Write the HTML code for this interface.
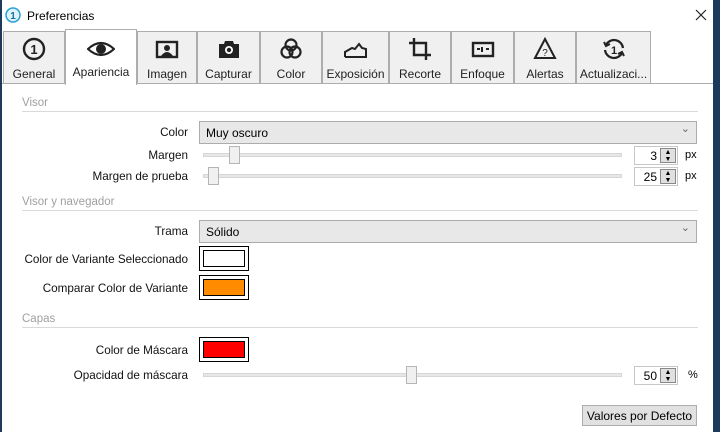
<!DOCTYPE html>
<html><head><meta charset="utf-8"><style>
*{margin:0;padding:0;box-sizing:border-box}
body{width:720px;height:432px;background:#1d3a5c;position:relative;overflow:hidden;font-family:"Liberation Sans",sans-serif;font-size:12px;color:#000}
.win{position:absolute;left:0;top:0;width:713px;height:432px;background:#fff}
.a{position:absolute}
.tab{position:absolute;top:31px;height:53px;background:#f0f0f0;border:1px solid #adadad;border-bottom:none;text-align:center}
.tab .l{position:absolute;bottom:3px;left:0;right:0;font-size:12px;color:#222}
.tab svg{position:absolute;left:50%;top:5px;margin-left:-12px}
.sel{background:#fff;top:29px;height:56px;z-index:2}
.sec{position:absolute;left:22px;width:676px;border-bottom:1px solid #d9d9d9;color:#a0a0a0;font-size:11.5px;height:15px}
.lbl{position:absolute;right:525px;text-align:right;font-size:11.7px;color:#111;white-space:nowrap}
.combo{position:absolute;left:199px;width:498px;height:23px;background:#e8e8e8;border:1px solid #acacac;padding:4px 6px;font-size:12px}
.combo:after{content:"⌄";position:absolute;right:6px;top:0;color:#666;font-size:11px}
.track{position:absolute;left:203px;width:419px;height:4px;background:#e7e7e7;border:1px solid #d6d6d6}
.thumb{position:absolute;width:11px;height:18px;background:#f0f0f0;border:1px solid #b5b5b5}
.num{position:absolute;left:634px;width:44px;height:19px;border:1px solid #c8c8c8;text-align:right;padding:2px 20px 0 0;font-size:12px}
.spin{position:absolute;right:1px;top:1px;width:16px;height:15px;background:#e0e0e0;border:1px solid #888;font-size:7px;line-height:7px;text-align:center}
.sw{position:absolute;left:199px;width:50px;height:25px;border:1px solid #000;padding:3px}
.sw div{width:100%;height:100%;border:1px solid #000}
</style></head><body>
<div class="win">
<div class="a" style="left:0;top:0;width:2px;height:432px;background:#1d3a5c"></div>
<svg class="a" style="left:5px;top:7px" width="16" height="16"><circle cx="8" cy="8" r="7" fill="#dff3fb" stroke="#29a0d8" stroke-width="1.5"/><text x="8" y="12" font-size="10" font-weight="bold" text-anchor="middle" fill="#1a6fa0" font-family="Liberation Sans">1</text></svg>
<div class="a" style="left:27px;top:9px;font-size:12px">Preferencias</div>
<svg class="a" style="left:695px;top:9px" width="12" height="12"><path d="M1 1L11 11M11 1L1 11" stroke="#222" stroke-width="1.2"/></svg>

<div class="tab" style="left:3px;width:62px"><svg width="24" height="24"><circle cx="12" cy="12" r="10" fill="none" stroke="#222" stroke-width="2.4"/><text x="12" y="17" font-size="13" font-weight="bold" text-anchor="middle" fill="#222" font-family="Liberation Sans">1</text></svg><div class="l">General</div></div>
<div class="tab sel" style="left:65px;width:72px"><svg width="28" height="24" style="top:7px;margin-left:-14px"><path d="M1 12 Q14 0 27 12 Q14 24 1 12Z" fill="none" stroke="#222" stroke-width="2.2"/><circle cx="14" cy="12" r="5" fill="#222"/></svg><div class="l" style="bottom:6px">Apariencia</div></div>
<div class="tab" style="left:137px;width:60px"><svg width="24" height="24"><rect x="2" y="5" width="20" height="15" fill="none" stroke="#222" stroke-width="2.4"/><circle cx="12" cy="11" r="3" fill="#222"/><path d="M6 19 Q12 11 18 19Z" fill="#222"/></svg><div class="l">Imagen</div></div>
<div class="tab" style="left:197px;width:63px"><svg width="24" height="24"><path d="M8 4h8l1 3h5v14H2V7h5z" fill="#222"/><circle cx="12" cy="13" r="4" fill="#fff"/><circle cx="12" cy="13" r="2.2" fill="#222"/></svg><div class="l">Capturar</div></div>
<div class="tab" style="left:260px;width:62px"><svg width="24" height="24"><g fill="none" stroke="#222" stroke-width="2.2"><circle cx="12" cy="8" r="5.5"/><circle cx="8" cy="15" r="5.5"/><circle cx="16" cy="15" r="5.5"/></g></svg><div class="l">Color</div></div>
<div class="tab" style="left:322px;width:67px"><svg width="24" height="24"><path d="M1 20V15l7-4 3 1 4-5 3 4 4 1v8" fill="none" stroke="#222" stroke-width="2"/><path d="M1 20h22" stroke="#222" stroke-width="2"/></svg><div class="l">Exposición</div></div>
<div class="tab" style="left:389px;width:62px"><svg width="24" height="24"><path d="M6 1v17h17M1 6h17v17" fill="none" stroke="#222" stroke-width="2.4"/></svg><div class="l">Recorte</div></div>
<div class="tab" style="left:451px;width:63px"><svg width="24" height="24"><rect x="2" y="6" width="20" height="13" fill="none" stroke="#222" stroke-width="2.4"/><path d="M6 12h3M11 10v5M15 12h3" stroke="#222" stroke-width="2"/></svg><div class="l">Enfoque</div></div>
<div class="tab" style="left:514px;width:62px"><svg width="24" height="24"><path d="M12 2L22 21H2Z" fill="none" stroke="#222" stroke-width="2"/><text x="12" y="19" font-size="10" text-anchor="middle" fill="#222" font-family="Liberation Sans">?</text></svg><div class="l">Alertas</div></div>
<div class="tab" style="left:576px;width:75px"><svg width="24" height="24"><path d="M4 8A9 9 0 0 1 21 11M20 16A9 9 0 0 1 3 13" fill="none" stroke="#222" stroke-width="2.2"/><path d="M2 5l2 4 4-2M22 19l-2-4-4 2" fill="none" stroke="#222" stroke-width="2"/><text x="12" y="17" font-size="11" font-weight="bold" text-anchor="middle" fill="#222" font-family="Liberation Sans">1</text></svg><div class="l">Actualizaci...</div></div>
<div class="a" style="left:2px;top:83px;width:711px;border-top:1px solid #adadad"></div>

<div class="sec" style="top:97px">Visor</div>
<div class="lbl" style="top:126px">Color</div>
<div class="combo" style="top:121px">Muy oscuro</div>
<div class="lbl" style="top:149px">Margen</div>
<div class="track" style="top:153px"></div><div class="thumb" style="left:229px;top:146px"></div>
<div class="num" style="top:146px">3<div class="spin">▲<br>▼</div></div><div class="a" style="left:685px;top:149px;font-size:11px">px</div>
<div class="lbl" style="top:170px">Margen de prueba</div>
<div class="track" style="top:174px"></div><div class="thumb" style="left:208px;top:167px"></div>
<div class="num" style="top:167px">25<div class="spin">▲<br>▼</div></div><div class="a" style="left:685px;top:170px;font-size:11px">px</div>

<div class="sec" style="top:196px">Visor y navegador</div>
<div class="lbl" style="top:225px">Trama</div>
<div class="combo" style="top:220px">Sólido</div>
<div class="lbl" style="top:253px">Color de Variante Seleccionado</div>
<div class="sw" style="top:246px"><div style="background:#fff"></div></div>
<div class="lbl" style="top:282px">Comparar Color de Variante</div>
<div class="sw" style="top:275px"><div style="background:#ff8c00"></div></div>

<div class="sec" style="top:313px">Capas</div>
<div class="lbl" style="top:344px">Color de Máscara</div>
<div class="sw" style="top:337px"><div style="background:#f00"></div></div>
<div class="lbl" style="top:369px">Opacidad de máscara</div>
<div class="track" style="top:373px"></div><div class="thumb" style="left:406px;top:366px"></div>
<div class="num" style="top:366px">50<div class="spin">▲<br>▼</div></div><div class="a" style="left:688px;top:369px;font-size:11px">%</div>

<div class="a" style="left:582px;top:405px;width:115px;height:21px;background:#e1e1e1;border:1px solid #adadad;text-align:center;padding-top:3px;font-size:12px">Valores por Defecto</div>
</div>
</body></html>
